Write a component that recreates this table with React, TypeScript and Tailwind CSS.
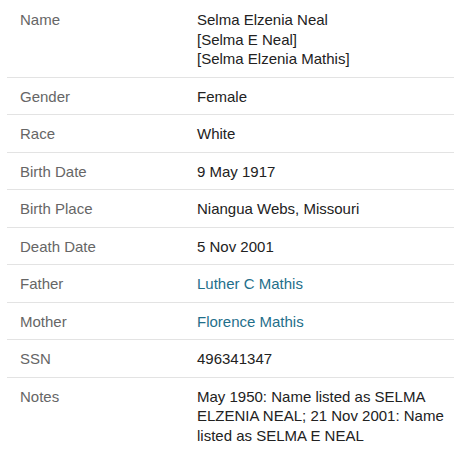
import React from "react";

type Row = { label: string; lines: string[]; link?: boolean; wrap?: boolean };

const rows: Row[] = [
  { label: "Name", lines: ["Selma Elzenia Neal", "[Selma E Neal]", "[Selma Elzenia Mathis]"] },
  { label: "Gender", lines: ["Female"] },
  { label: "Race", lines: ["White"] },
  { label: "Birth Date", lines: ["9 May 1917"] },
  { label: "Birth Place", lines: ["Niangua Webs, Missouri"] },
  { label: "Death Date", lines: ["5 Nov 2001"] },
  { label: "Father", lines: ["Luther C Mathis"], link: true },
  { label: "Mother", lines: ["Florence Mathis"], link: true },
  { label: "SSN", lines: ["496341347"] },
  {
    label: "Notes",
    lines: ["May 1950: Name listed as SELMA ELZENIA NEAL; 21 Nov 2001: Name listed as SELMA E NEAL"],
    wrap: true,
  },
];

export default function App() {
  return (
    <div className="w-[454px] h-[451px] bg-white pl-[7px] pt-[1px] text-[15px] leading-[19.5px] font-['Liberation_Sans',Arial,sans-serif]">
      {rows.map((r, i) => (
        <div
          key={r.label}
          className={`flex pt-[9px] pb-[8px] ${i < rows.length - 1 ? "border-b border-[#e3e3e3]" : ""}`}
        >
          <div className="w-[190px] shrink-0 pl-[13px] text-[#666666]">{r.label}</div>
          <div className={`${r.wrap ? "w-[250px]" : ""} ${r.link ? "text-[#1f6f8b]" : "text-[#222222]"}`}>
            {r.lines.map((l) => (
              <div key={l}>{l}</div>
            ))}
          </div>
        </div>
      ))}
    </div>
  );
}
